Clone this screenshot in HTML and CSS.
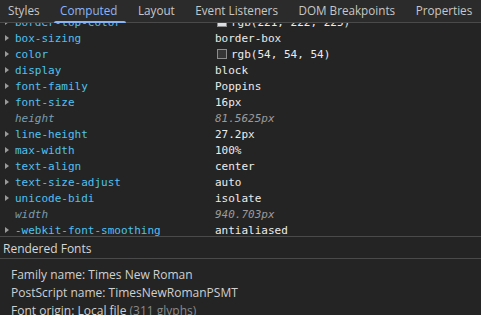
FILE: index.html
```html
<!DOCTYPE html>
<html lang="en">
<head>
    <meta charset="UTF-8">
    <title>Computed</title>
    <link rel="stylesheet" href="styles.css">
</head>
<body>
    <!-- Panel tabs -->
    <div class="tabs">
        <div class="tab">Styles</div>
        <div class="tab active">Computed</div>
        <div class="tab">Layout</div>
        <div class="tab">Event Listeners</div>
        <div class="tab">DOM Breakpoints</div>
        <div class="tab">Properties</div>
    </div>

    <!-- Computed properties list -->
    <div class="props">
        <div class="list">
            <div class="row"><span class="arrow"></span><span class="name">border-top-color</span><span class="value"><i class="swatch light"></i>rgb(221, 222, 225)</span></div>
            <div class="row"><span class="arrow"></span><span class="name">box-sizing</span><span class="value">border-box</span></div>
            <div class="row"><span class="arrow"></span><span class="name">color</span><span class="value"><i class="swatch dark"></i>rgb(54, 54, 54)</span></div>
            <div class="row"><span class="arrow"></span><span class="name">display</span><span class="value">block</span></div>
            <div class="row"><span class="arrow"></span><span class="name">font-family</span><span class="value">Poppins</span></div>
            <div class="row"><span class="arrow"></span><span class="name">font-size</span><span class="value">16px</span></div>
            <div class="row dim"><span class="noarrow"></span><span class="name">height</span><span class="value">81.5625px</span></div>
            <div class="row"><span class="arrow"></span><span class="name">line-height</span><span class="value">27.2px</span></div>
            <div class="row"><span class="arrow"></span><span class="name">max-width</span><span class="value">100%</span></div>
            <div class="row"><span class="arrow"></span><span class="name">text-align</span><span class="value">center</span></div>
            <div class="row"><span class="arrow"></span><span class="name">text-size-adjust</span><span class="value">auto</span></div>
            <div class="row"><span class="arrow"></span><span class="name">unicode-bidi</span><span class="value">isolate</span></div>
            <div class="row dim"><span class="noarrow"></span><span class="name">width</span><span class="value">940.703px</span></div>
            <div class="row"><span class="arrow"></span><span class="name">-webkit-font-smoothing</span><span class="value">antialiased</span></div>
        </div>
    </div>

    <!-- Rendered fonts -->
    <div class="fonts-head">Rendered Fonts</div>
    <div class="fonts">
        <p>Family name: Times New Roman</p>
        <p>PostScript name: TimesNewRomanPSMT</p>
        <p>Font origin: Local file <span class="muted">(311 glyphs)</span></p>
    </div>
</body>
</html>
```

FILE: styles.css
```css
* {
    margin: 0;
    padding: 0;
    box-sizing: border-box;
}

body {
    width: 481px;
    height: 315px;
    overflow: hidden;
    background-color: #242424;
    font-family: 'Open Sans', 'Noto Sans', sans-serif;
    font-size: 12px;
    color: #d6d6d6;
}

/* Tabs */
.tabs {
    display: flex;
    height: 23px;
    background-color: #2b2b2b;
    border-bottom: 1px solid #4a4a4a;
}
.tab {
    position: relative;
    padding: 0 10.5px 0 8px;
    margin-right: 2px;
    line-height: 21px;
    font-size: 11.7px;
    color: #c7c7c7;
    white-space: nowrap;
}
.tab.active {
    color: #8ab4f8;
}
.tab.active::after {
    content: "";
    position: absolute;
    left: 2px;
    right: 2px;
    bottom: -1px;
    height: 2px;
    border-radius: 2px 2px 0 0;
    background-color: #8ab4f8;
}

/* Property list */
.props {
    height: 214px;
    overflow: hidden;
    border-bottom: 1px solid #4a4a4a;
}
.list {
    margin-top: -9px;
}
.row {
    display: flex;
    align-items: center;
    height: 16px;
    font-family: 'DejaVu Sans Mono', 'Liberation Mono', monospace;
    font-size: 11px;
    white-space: nowrap;
}
.arrow,
.noarrow {
    width: 15px;
    flex-shrink: 0;
    display: flex;
    justify-content: center;
    padding-right: 1px;
}
.arrow::before {
    content: "";
    border-left: 4px solid #9a9a9a;
    border-top: 3.5px solid transparent;
    border-bottom: 3.5px solid transparent;
}
.name {
    width: 200px;
    color: #4fc1f0;
}
.value {
    display: flex;
    align-items: center;
    color: #ececec;
}
.dim .name {
    color: #7a9eb0;
    font-style: italic;
}
.dim .value {
    color: #9a9a9a;
    font-style: italic;
}
.swatch {
    width: 10px;
    height: 10px;
    margin: 0 4px 0 2px;
    border: 1px solid #8c8c8c;
}
.swatch.light {
    background-color: rgb(221, 222, 225);
}
.swatch.dark {
    background-color: rgb(54, 54, 54);
}

/* Rendered fonts */
.fonts-head {
    height: 22px;
    padding: 2px 0 0 3px;
    line-height: 19px;
    color: #d6d6d6;
    border-bottom: 1px solid #4a4a4a;
}
.fonts {
    padding: 7px 11px 0;
}
.fonts p {
    line-height: 18px;
    color: #d0d0d0;
}
.muted {
    color: #8a8a8a;
}
```
